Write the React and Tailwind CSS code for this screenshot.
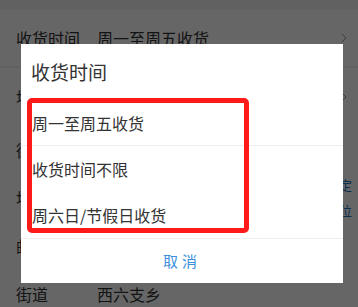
import { ChevronRight } from 'lucide-react';

const font = { fontFamily: '"Noto Sans CJK SC", "Noto Sans", sans-serif' };

const rows = [
  { label: '收货时间', value: '周一至周五收货', h: 'h-[56px]', arrow: true },
  { label: '地区', value: '', h: 'h-[58px]', arrow: true, sep: true },
  { label: '街道', value: '', h: 'h-[48px]' },
  { label: '地址', value: '', h: 'h-[48px]', blue: true },
  { label: '邮编', value: '', h: 'h-[48px]' },
  { label: '街道', value: '西六支乡', h: 'h-[48px]' },
];

const options = ['周一至周五收货', '收货时间不限', '周六日/节假日收货'];

export default function App() {
  return (
    <div className="relative w-[358px] h-[307px] overflow-hidden bg-[#f2f2f2]" style={font}>
      {/* page behind the dialog */}
      <div className="flex flex-col pt-[10px]">
        {rows.map((row, i) => (
          <div
            key={i}
            className={`flex items-center bg-white pl-4 pr-[6px] text-[16px] text-[#333] ${row.h} ${row.sep ? 'mt-[2px]' : ''}`}
          >
            <span className="w-[81px] shrink-0">{row.label}</span>
            <span className="flex-1">{row.value}</span>
            {row.arrow && <ChevronRight className="w-[16px] h-[16px] text-[#999]" strokeWidth={1.5} />}
            {row.blue && (
              <span className="flex flex-col text-[13px] leading-[26px] text-[#1a73c8]">
                <span>定</span>
                <span>位</span>
              </span>
            )}
          </div>
        ))}
      </div>

      <div className="absolute inset-0 bg-black/60" />

      {/* dialog */}
      <div className="absolute left-[21px] top-[44px] w-[322px] h-[239px] bg-white flex flex-col">
        <div className="h-[56px] flex items-center pl-[10px] text-[19px] text-[#333]">收货时间</div>
        {options.map((opt, i) => (
          <div
            key={opt}
            className={`h-[46px] flex items-center pl-[11px] text-[16px] text-[#333] ${i === 0 ? 'border-b border-[#eeeeee]' : ''}`}
          >
            {opt}
          </div>
        ))}
        <div className="flex-1 flex items-center justify-center border-t border-[#eeeeee] text-[15px] tracking-[4px] text-[#3d8fdc]">
          取消
        </div>
      </div>

      {/* red annotation box */}
      <div className="absolute left-[27px] top-[98px] w-[222px] h-[135px] border-[5px] border-[#ff1a1a] rounded-[5px]" />
    </div>
  );
}
